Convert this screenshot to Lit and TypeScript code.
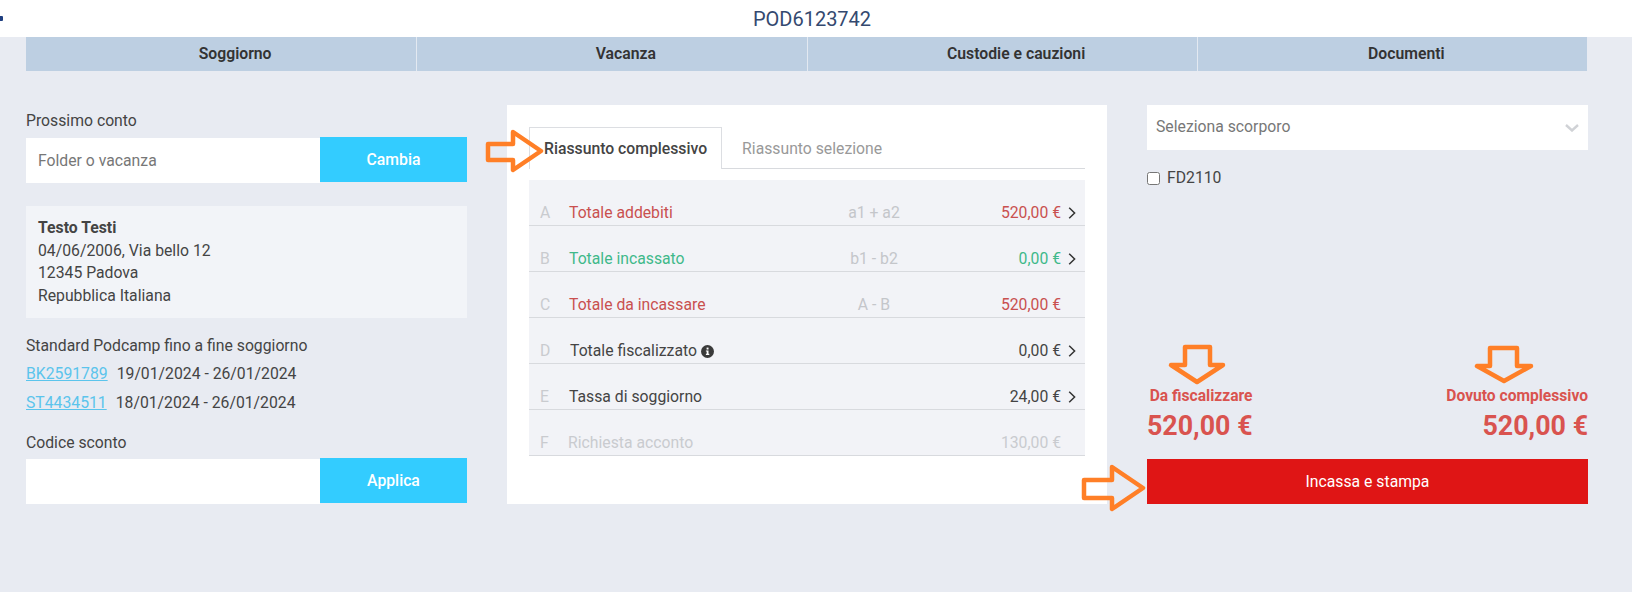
import { LitElement, html, css, svg } from 'lit';
import { customElement, state } from 'lit/decorators.js';
import { classMap } from 'lit/directives/class-map.js';

interface SummaryRow {
    letter: string;
    label: string;
    formula?: string;
    amount: string;
    tone: 'red' | 'green' | 'dark' | 'muted';
    chevron: boolean;
    info?: boolean;
    nudge?: number;
}

const SECTIONS = ['Soggiorno', 'Vacanza', 'Custodie e cauzioni', 'Documenti'];

const ROWS: SummaryRow[] = [
    { letter: 'A', label: 'Totale addebiti', formula: 'a1 + a2', amount: '520,00 €', tone: 'red', chevron: true },
    { letter: 'B', label: 'Totale incassato', formula: 'b1 - b2', amount: '0,00 €', tone: 'green', chevron: true },
    { letter: 'C', label: 'Totale da incassare', formula: 'A - B', amount: '520,00 €', tone: 'red', chevron: false },
    { letter: 'D', label: 'Totale fiscalizzato', amount: '0,00 €', tone: 'dark', chevron: true, info: true, nudge: 1 },
    { letter: 'E', label: 'Tassa di soggiorno', amount: '24,00 €', tone: 'dark', chevron: true },
    { letter: 'F', label: 'Richiesta acconto', amount: '130,00 €', tone: 'muted', chevron: false, nudge: -1 },
];

// annotation arrows drawn on top of the screenshot
const ARROWS = [
    '488,144 513,144 513,132 541,151 513,170 513,160 488,160',
    '1185,347 1210,347 1210,365 1223,365 1197,382 1171,365 1185,365',
    '1490,348 1517,348 1517,366 1531,366 1504,381 1477,366 1490,366',
    '1084,480 1112,480 1112,467 1143,488 1112,509 1112,498 1084,498',
];

@customElement('app-root')
export class AppRoot extends LitElement {
    @state() private activeTab = 0;

    static styles = css`
        :host {
            display: block;
            position: relative;
            min-height: 592px;
            background: #e8ebf2;
            color: #444;
            font-family: Roboto, "Liberation Sans", sans-serif;
            font-size: 15.75px;
            line-height: 24px;
        }

        .header {
            position: relative;
            height: 37px;
            padding-right: 8px;
            display: flex;
            align-items: center;
            justify-content: center;
            background: #fff;
            color: #34496f;
            font-size: 20px;
        }
        .logo-dot {
            position: absolute;
            left: 0;
            top: 16px;
            width: 3px;
            height: 5px;
            background: #1f3f80;
            border-radius: 0 1px 1px 0;
        }

        .sections {
            margin: 0 45px 0 26px;
            height: 34px;
            display: grid;
            grid-template-columns: repeat(4, 1fr);
            background: #bdcfe2;
        }
        .section {
            padding-left: 28px;
            display: flex;
            align-items: center;
            justify-content: center;
            font-weight: 600;
            font-size: 15.75px;
            color: #333;
            border-left: 1px solid #e3e9f1;
        }
        .section:first-child {
            border-left: 0;
        }

        .body {
            display: grid;
            grid-template-columns: 441px 600px 441px;
            column-gap: 40px;
            padding: 34px 44px 0 26px;
        }

        .label-top {
            margin-top: 4px;
        }
        .input-group {
            display: flex;
            align-items: flex-start;
            margin-top: 4px;
        }
        .text-input {
            flex: 1;
            min-width: 0;
            height: 45px;
            margin-top: 1px;
            padding: 0 12px;
            display: flex;
            align-items: center;
            background: #fff;
            color: #777;
        }
        .action {
            width: 147px;
            height: 45px;
            display: flex;
            align-items: center;
            justify-content: center;
            background: #33ccff;
            color: #fff;
            font-weight: 500;
        }

        .guest {
            margin-top: 23px;
            padding: 11px 12px;
            background: #f2f4f8;
            line-height: 22.5px;
        }
        .guest strong {
            display: block;
        }

        .plan {
            margin-top: 16px;
        }
        .booking {
            display: flex;
            gap: 9px;
            margin-top: 4px;
        }
        .booking + .booking {
            margin-top: 5px;
        }
        .booking a {
            color: #5bc4ec;
            text-decoration: underline;
        }
        .discount {
            margin-top: 16px;
        }
        .discount + .input-group {
            margin-top: 3px;
        }

        .card {
            height: 399px;
            box-sizing: border-box;
            padding: 22px 22px 0;
            background: #fff;
        }
        .tabs {
            display: flex;
            gap: 5px;
            height: 42px;
            box-sizing: border-box;
            border-bottom: 1px solid #d8dade;
        }
        .tab {
            height: 42px;
            box-sizing: border-box;
            padding: 0 14px;
            display: flex;
            align-items: center;
            color: #999;
            border: 1px solid transparent;
            border-bottom: 0;
            cursor: pointer;
        }
        .tab.active {
            background: #fff;
            color: #444;
            font-weight: 500;
            border-color: #dcdee2;
        }

        .summary {
            margin-top: 11px;
            background: #f2f3f7;
        }
        .row {
            display: grid;
            grid-template-columns: 29px 230px 150px 112px 24px;
            height: 46px;
            box-sizing: border-box;
            padding: 21px 0 0 11px;
            border-bottom: 1px solid #d8dade;
        }
        .letter {
            color: #c9cbcf;
        }
        .name {
            display: flex;
            align-items: center;
            gap: 4px;
            white-space: nowrap;
        }
        .formula {
            text-align: center;
            color: #c4c6ca;
        }
        .amount {
            text-align: right;
            white-space: nowrap;
        }
        .chevron {
            padding-left: 7px;
            display: flex;
            align-items: center;
        }
        .row.red .name,
        .row.red .amount {
            color: #c9504f;
        }
        .row.green .name,
        .row.green .amount {
            color: #3fb98a;
        }
        .row.dark .name,
        .row.dark .amount {
            color: #444;
        }
        .row.muted .name,
        .row.muted .amount {
            color: #c9cbcf;
        }

        .side {
            display: flex;
            flex-direction: column;
        }
        .select {
            height: 45px;
            flex: none;
            box-sizing: border-box;
            padding: 0 9px 2px;
            display: flex;
            align-items: center;
            justify-content: space-between;
            background: #fff;
            color: #777;
        }
        .select svg {
            margin-top: 2px;
        }
        .check {
            display: flex;
            align-items: center;
            gap: 7px;
            margin-top: 16px;
        }
        .check input {
            margin: 0;
        }
        .totals {
            display: flex;
            justify-content: space-between;
            margin-top: auto;
            text-align: right;
            color: #d9534f;
            font-weight: 700;
        }
        .totals .caption {
            font-size: 15.6px;
            line-height: 20px;
        }
        .totals .value {
            margin-top: 4px;
            font-size: 26.8px;
            line-height: 32px;
        }
        .pay {
            height: 45px;
            flex: none;
            margin-top: 17px;
            display: flex;
            align-items: center;
            justify-content: center;
            background: #df1515;
            color: #fff;
        }

        .arrows {
            position: absolute;
            left: 0;
            top: 0;
            pointer-events: none;
        }
        .arrows polygon {
            fill: none;
            stroke: #ff7f27;
            stroke-width: 4.5;
            stroke-linejoin: round;
        }
    `;

    renderRow(row: SummaryRow) {
        const classes = { row: true, [row.tone]: true };
        return html`
            <div class=${classMap(classes)}>
                <span class="letter">${row.letter}</span>
                <span class="name" style=${row.nudge ? `margin-left:${row.nudge}px` : ''}>
                    ${row.label}
                    ${row.info
                        ? html`<svg width="13" height="13" viewBox="0 0 13 13">
                              <circle cx="6.5" cy="6.5" r="6.5" fill="#3a3a3a"></circle>
                              <rect x="5.6" y="2.6" width="1.9" height="1.9" fill="#fff"></rect>
                              <path d="M4.9 5.5h2.6v3.3h.8v1.1H4.9V8.8h.8V6.6h-.8z" fill="#fff"></path>
                          </svg>`
                        : ''}
                </span>
                <span class="formula">${row.formula ?? ''}</span>
                <span class="amount">${row.amount}</span>
                <span class="chevron">
                    ${row.chevron
                        ? html`<svg width="8" height="12" viewBox="0 0 8 12">
                              <path d="M1.2 .8 6.6 6 1.2 11.2" fill="none" stroke="#333" stroke-width="1.5"></path>
                          </svg>`
                        : ''}
                </span>
            </div>
        `;
    }

    render() {
        return html`
            <div class="header">
                <span class="logo-dot"></span>
                POD6123742
            </div>

            <div class="sections">
                ${SECTIONS.map((name) => html`<div class="section">${name}</div>`)}
            </div>

            <div class="body">
                <div>
                    <div class="label-top">Prossimo conto</div>
                    <div class="input-group">
                        <div class="text-input">Folder o vacanza</div>
                        <div class="action">Cambia</div>
                    </div>

                    <div class="guest">
                        <strong>Testo Testi</strong>
                        04/06/2006, Via bello 12<br />
                        12345 Padova<br />
                        Repubblica Italiana
                    </div>

                    <div class="plan">Standard Podcamp fino a fine soggiorno</div>
                    <div class="booking"><a>BK2591789</a><span>19/01/2024 - 26/01/2024</span></div>
                    <div class="booking"><a>ST4434511</a><span>18/01/2024 - 26/01/2024</span></div>

                    <div class="discount">Codice sconto</div>
                    <div class="input-group">
                        <div class="text-input"></div>
                        <div class="action">Applica</div>
                    </div>
                </div>

                <div class="card">
                    <div class="tabs">
                        ${['Riassunto complessivo', 'Riassunto selezione'].map(
                            (name, i) => html`<div
                                class=${classMap({ tab: true, active: i === this.activeTab })}
                                @click=${() => (this.activeTab = i)}
                            >
                                ${name}
                            </div>`
                        )}
                    </div>
                    <div class="summary">${ROWS.map((row) => this.renderRow(row))}</div>
                </div>

                <div class="side">
                    <div class="select">
                        Seleziona scorporo
                        <svg width="14" height="8" viewBox="0 0 14 8">
                            <path d="M1 1l6 5.5L13 1" fill="none" stroke="#d0d2d6" stroke-width="2.4"></path>
                        </svg>
                    </div>
                    <label class="check"><input type="checkbox" />FD2110</label>

                    <div class="totals">
                        <div>
                            <div class="caption">Da fiscalizzare</div>
                            <div class="value">520,00 €</div>
                        </div>
                        <div>
                            <div class="caption">Dovuto complessivo</div>
                            <div class="value">520,00 €</div>
                        </div>
                    </div>
                    <div class="pay">Incassa e stampa</div>
                </div>
            </div>

            <svg class="arrows" width="1632" height="592">
                ${ARROWS.map((points) => svg`<polygon points=${points}></polygon>`)}
            </svg>
        `;
    }
}
